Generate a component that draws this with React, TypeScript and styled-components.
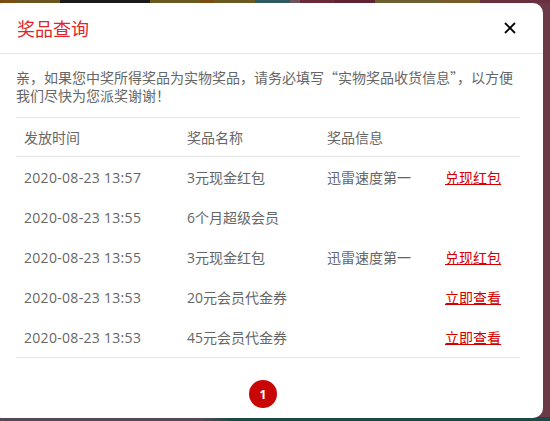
import React from "react";
import styled, { createGlobalStyle } from "styled-components";

const GlobalStyle = createGlobalStyle`
    html, body {
        margin: 0;
        padding: 0;
    }
    body {
        font-family: "Open Sans", "Noto Sans CJK SC", sans-serif;
        overflow: hidden;
    }
`;

const Colors = {
    red: "#e0262a",
    darkRed: "#c80606",
    link: "#d40000",
    text: "#666666",
    line: "#e6e6e6",
};

const Backdrop = styled.div`
    width: 550px;
    height: 421px;
    display: flex;
    flex-direction: column;
    overflow: hidden;
    background:
        linear-gradient(90deg,
            #7a4c12 0 15px, #6a5520 15px 60px, #1b1a1a 60px 150px, #6a5a22 150px 200px,
            #7a4c12 200px 215px, #6a5a22 215px 255px, #2f5a60 255px 290px, #6e5260 290px 300px,
            #6a2a3a 300px 335px, #5e2232 335px 375px, #6b6030 375px 440px, #7a5a28 440px 480px,
            #6b3040 480px 550px) top / 100% 3px no-repeat,
        linear-gradient(90deg, #52485a 0 200px, #1d4848 230px 550px) bottom / 100% 4px no-repeat,
        #6b3a48;
`;

const Modal = styled.div`
    margin: 3px 0 0 -8px;
    width: 551px;
    height: 415px;
    box-sizing: border-box;
    background: #fff;
    border-radius: 10px;
    display: flex;
    flex-direction: column;
`;

const Header = styled.div`
    height: 50px;
    display: flex;
    align-items: center;
    justify-content: space-between;
    padding: 0 27px 0 25px;
    border-bottom: 1px solid ${Colors.line};
`;

const Title = styled.h2`
    margin: 0;
    font-family: "Noto Sans CJK SC", sans-serif;
    font-size: 18px;
    font-weight: 400;
    color: ${Colors.red};
    line-height: 24px;
`;

const CloseButton = styled.button`
    width: 12px;
    height: 12px;
    padding: 0;
    border: none;
    background: none;
    cursor: pointer;
    display: flex;
    svg {
        display: block;
    }
`;

const Body = styled.div`
    padding: 14px 23px 0 24px;
    display: flex;
    flex-direction: column;
`;

const Notice = styled.p`
    margin: 0 -6px 13px 0;
    font-family: "Noto Sans CJK SC", sans-serif;
    font-size: 14px;
    line-height: 18px;
    color: ${Colors.text};
`;

const Table = styled.div`
    border-top: 1px solid ${Colors.line};
    border-bottom: 1px solid ${Colors.line};
`;

const Row = styled.div<{ head?: boolean }>`
    display: grid;
    grid-template-columns: 163px 140px 118px 1fr;
    align-items: center;
    height: ${({ head }) => head ? "38px" : "40px"};
    ${({ head }) => head && `border-bottom: 1px solid ${Colors.line};`}
    font-size: 14px;
    color: ${Colors.text};
`;

const Cell = styled.div<{ wide?: boolean }>`
    padding-left: 8px;
    white-space: nowrap;
    ${({ wide }) => wide && "letter-spacing: 0.3px;"}
`;

const ActionLink = styled.a`
    color: ${Colors.link};
    text-decoration: underline;
    cursor: pointer;
`;

const Pagination = styled.div`
    display: flex;
    justify-content: center;
    padding: 22px 10px 0 0;
`;

const PageButton = styled.span`
    width: 28px;
    height: 28px;
    border-radius: 50%;
    background: ${Colors.darkRed};
    color: #fff;
    font-size: 12px;
    font-weight: bold;
    display: flex;
    align-items: center;
    justify-content: center;
`;

type Prize = {
    time: string
    name: string
    info?: string
    action?: string
}

const prizes: Prize[] = [
    { time: "2020-08-23 13:57", name: "3元现金红包", info: "迅雷速度第一", action: "兑现红包" },
    { time: "2020-08-23 13:55", name: "6个月超级会员" },
    { time: "2020-08-23 13:55", name: "3元现金红包", info: "迅雷速度第一", action: "兑现红包" },
    { time: "2020-08-23 13:53", name: "20元会员代金券", action: "立即查看" },
    { time: "2020-08-23 13:53", name: "45元会员代金券", action: "立即查看" },
];

const App = () => {
    return (
        <Backdrop>
            <GlobalStyle />
            <Modal>
                <Header>
                    <Title>奖品查询</Title>
                    <CloseButton aria-label="关闭">
                        <svg width="12" height="12" viewBox="0 0 12 12">
                            <path d="M1 1L11 11M11 1L1 11" stroke="#000" strokeWidth="1.8" />
                        </svg>
                    </CloseButton>
                </Header>
                <Body>
                    <Notice>
                        亲，如果您中奖所得奖品为实物奖品，请务必填写“实物奖品收货信息”，以方便<br />
                        我们尽快为您派奖谢谢！
                    </Notice>
                    <Table>
                        <Row head>
                            <Cell>发放时间</Cell>
                            <Cell>奖品名称</Cell>
                            <Cell>奖品信息</Cell>
                            <Cell />
                        </Row>
                        {prizes.map((prize, index) => (
                            <Row key={index}>
                                <Cell wide>{prize.time}</Cell>
                                <Cell>{prize.name}</Cell>
                                <Cell>{prize.info}</Cell>
                                <Cell>
                                    {prize.action && (
                                        <ActionLink>{prize.action}</ActionLink>
                                    )}
                                </Cell>
                            </Row>
                        ))}
                    </Table>
                    <Pagination>
                        <PageButton>1</PageButton>
                    </Pagination>
                </Body>
            </Modal>
        </Backdrop>
    )
}

export default App
